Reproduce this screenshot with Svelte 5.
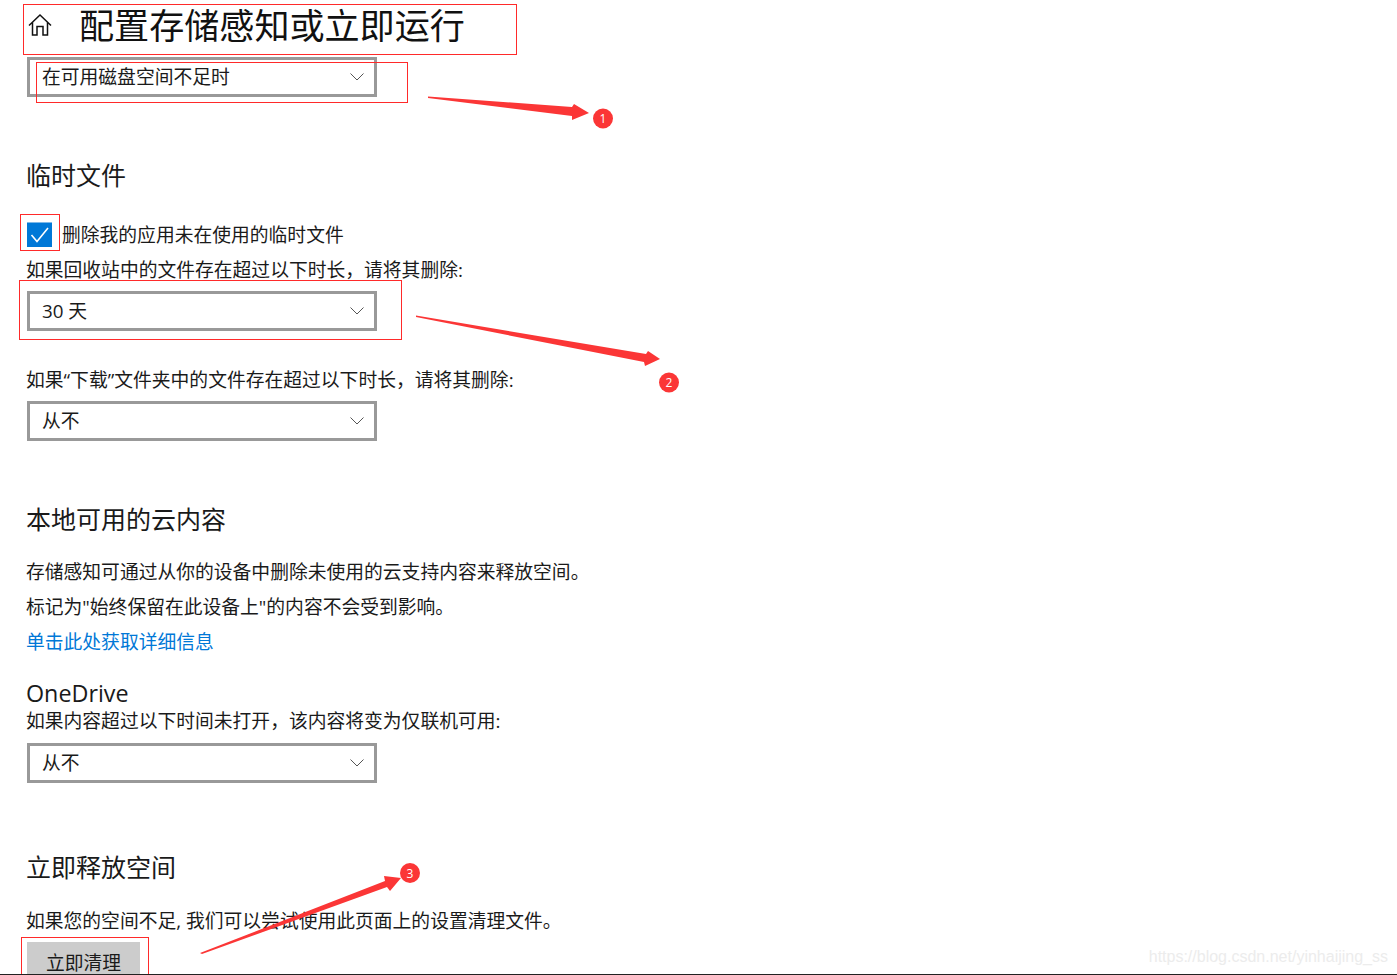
<script>
  const rects = [
    [23.5, 4.5, 493, 50],
    [36.5, 62.5, 371, 40],
    [20.5, 214.5, 39, 36],
    [19.5, 280.5, 382, 59],
    [21.5, 937.5, 127, 40]
  ];
  const arrows = [
    '428,96.500 572,107 574,104 589,113 572,120 572,116 428,98',
    '416,315.500 646,354 648,351 660,359 645,366 644,362 416,317',
    '200,953 385,881 384,876 401,878 390,891 387,887 202,954'
  ];
  const badges = [
    [603, 118.500, '1'],
    [669, 382.500, '2'],
    [410, 873, '3']
  ];
</script>

{#snippet dropdown(label)}
  <div class="select">
    <span>{label}</span>
    <svg class="chev" width="14" height="8" viewBox="0 0 14 8"><path d="M.5.5 7 7l6.500-6.500" /></svg>
  </div>
{/snippet}

<div class="page">
  <header>
    <svg class="home" width="26" height="24" viewBox="0 0 26 24">
      <path d="M2 12.500 13 2l11 10.500M5.500 9.500V22h4.500v-8.500h6V22h4.500V9.500" />
    </svg>
    <h1>配置存储感知或立即运行</h1>
  </header>
  {@render dropdown('在可用磁盘空间不足时')}

  <h2 class="h-temp">临时文件</h2>
  <div class="check-row">
    <span class="box">
      <svg width="25" height="25" viewBox="0 0 25 25"><path d="M4.500 13l5.500 6.500L21 6" /></svg>
    </span>
    <span class="check-text">删除我的应用未在使用的临时文件</span>
  </div>
  <p class="label">如果回收站中的文件存在超过以下时长，请将其删除:</p>
  {@render dropdown('30 天')}
  <p class="label second">如果“下载”文件夹中的文件存在超过以下时长，请将其删除:</p>
  {@render dropdown('从不')}

  <h2 class="h-cloud">本地可用的云内容</h2>
  <p class="para first">存储感知可通过从你的设备中删除未使用的云支持内容来释放空间。</p>
  <p class="para">标记为"始终保留在此设备上"的内容不会受到影响。</p>
  <p class="para"><a href="#top">单击此处获取详细信息</a></p>

  <h3>OneDrive</h3>
  <p class="label od">如果内容超过以下时间未打开，该内容将变为仅联机可用:</p>
  {@render dropdown('从不')}

  <h2 class="h-free">立即释放空间</h2>
  <p class="label free">如果您的空间不足, 我们可以尝试使用此页面上的设置清理文件。</p>
  <button>立即清理</button>

  <svg class="marks" width="1397" height="975" viewBox="0 0 1397 975">
    {#each rects as r}
      <rect x={r[0]} y={r[1]} width={r[2]} height={r[3]} />
    {/each}
    {#each arrows as a}
      <polygon points={a} />
    {/each}
    {#each badges as b}
      <circle cx={b[0]} cy={b[1]} r="10" />
      <text x={b[0]} y={b[1] + 4.500}>{b[2]}</text>
    {/each}
  </svg>
  <div class="watermark">https://blog.csdn.net/yinhaijing_ss</div>
</div>

<style>
  :global(body) {
    margin: 0;
    background: #fff;
  }
  .page {
    position: relative;
    box-sizing: border-box;
    width: 1397px;
    height: 975px;
    overflow: hidden;
    padding-left: 27px;
    border-bottom: 1px solid #222;
    color: #1a1a1a;
    font-family: "Open Sans", "Noto Sans CJK SC", sans-serif;
    font-size: 18.800px;
  }
  header {
    display: flex;
    align-items: center;
    height: 50px;
    margin-bottom: 7px;
  }
  .home {
    flex: none;
  }
  .home path {
    fill: none;
    stroke: #111;
    stroke-width: 1.500;
  }
  h1 {
    margin: 0 0 0 26px;
    font-size: 35.100px;
    font-weight: 400;
    line-height: 50px;
    color: #111;
  }
  .select {
    box-sizing: border-box;
    display: flex;
    align-items: center;
    justify-content: space-between;
    width: 350px;
    height: 40px;
    padding: 0 10px 0 12px;
    border: 3px solid #999;
    line-height: 34px;
  }
  .chev {
    flex: none;
  }
  .chev path {
    fill: none;
    stroke: #555;
    stroke-width: 1;
  }
  h2 {
    margin: 0 0 0 -1px;
    font-size: 25px;
    font-weight: 400;
    line-height: 40px;
  }
  .h-temp {
    margin-top: 58px;
  }
  .h-cloud {
    margin-top: 58px;
  }
  .h-free {
    margin-top: 63.500px;
  }
  .check-row {
    display: flex;
    align-items: center;
    gap: 10px;
    height: 36px;
    margin-top: 21px;
  }
  .check-text {
    margin-bottom: 1px;
  }
  .box {
    flex: none;
    width: 25px;
    height: 25px;
    background: #0078d7;
    box-shadow: inset 0 1px 0 #7db8e8;
  }
  .box svg {
    display: block;
  }
  .box path {
    fill: none;
    stroke: #fff;
    stroke-width: 1.600;
  }
  p {
    margin: 0 0 0 -1px;
  }
  .label {
    line-height: 34px;
    margin-top: 1px;
    margin-bottom: 4px;
  }
  .label.second {
    margin-top: 32px;
  }
  .para {
    line-height: 35px;
  }
  .para.first {
    margin-top: 16px;
  }
  a {
    color: #0078d7;
    text-decoration: none;
  }
  h3 {
    margin: 18px 0 0 -1px;
    font-size: 23.300px;
    font-weight: 400;
    line-height: 30px;
  }
  .label.od {
    line-height: 26px;
    margin-top: 0;
    margin-bottom: 9px;
  }
  .label.free {
    margin-top: 17.500px;
  }
  button {
    display: block;
    width: 113px;
    height: 40px;
    padding: 0;
    border: 0;
    background: #ccc;
    color: #1a1a1a;
    font: inherit;
    line-height: 42px;
  }
  .marks {
    position: absolute;
    left: 0;
    top: 0;
    pointer-events: none;
  }
  .marks rect {
    fill: none;
    stroke: #ff2a2a;
    stroke-width: 1;
  }
  .marks polygon,
  .marks circle {
    fill: #fb3636;
  }
  .marks text {
    fill: #fff;
    font-family: "Open Sans", sans-serif;
    font-size: 12px;
    text-anchor: middle;
  }
  .watermark {
    position: absolute;
    right: 9px;
    top: 945px;
    font-family: "Liberation Sans", sans-serif;
    font-size: 16px;
    line-height: 24px;
    color: #ececec;
  }
</style>
